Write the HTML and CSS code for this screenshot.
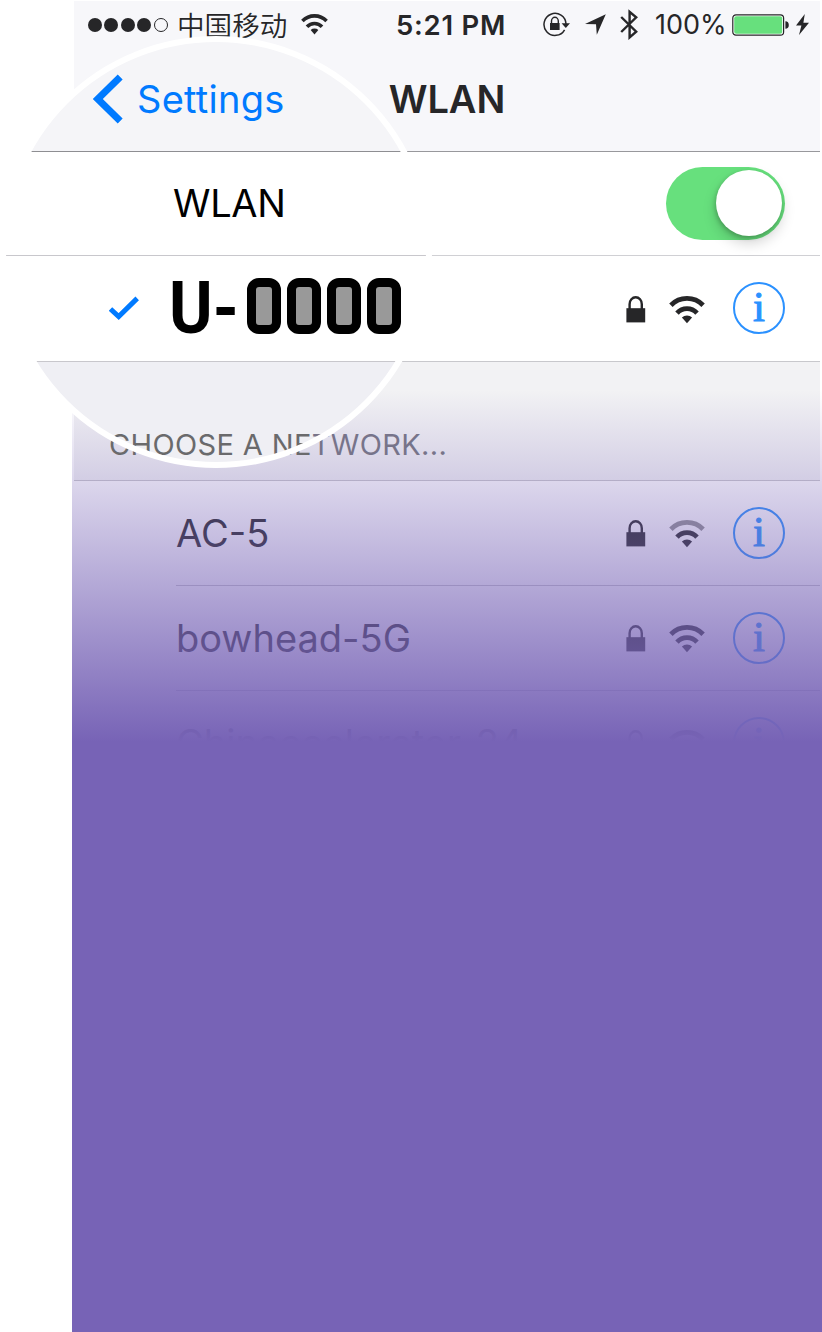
FILE: index.html
```html
<!DOCTYPE html>
<html lang="en">
<head>
<meta charset="utf-8">
<title>WLAN</title>
<link rel="stylesheet" href="styles.css">
</head>
<body>
<svg class="defs" aria-hidden="true">
  <symbol id="wifi" viewBox="0 0 38 28">
    <path d="M2.9 9.2A22.6 22.6 0 0 1 35.1 9.2" fill="none" stroke="currentColor" stroke-width="4.8"/>
    <path d="M9 17.1A13.6 13.6 0 0 1 29 17.1" fill="none" stroke="currentColor" stroke-width="4.8"/>
    <path d="M13.9 21.4A7.6 7.6 0 0 1 24.1 21.4L19 27.2Z" fill="currentColor"/>
  </symbol>
  <symbol id="wifi-weak" viewBox="0 0 38 28">
    <path d="M2.9 9.2A22.6 22.6 0 0 1 35.1 9.2" fill="none" stroke="currentColor" stroke-width="4.8" opacity=".5"/>
    <path d="M9 17.1A13.6 13.6 0 0 1 29 17.1" fill="none" stroke="currentColor" stroke-width="4.8"/>
    <path d="M13.9 21.4A7.6 7.6 0 0 1 24.1 21.4L19 27.2Z" fill="currentColor"/>
  </symbol>
  <symbol id="lock" viewBox="0 0 20 27">
    <path d="M3.6 13V8.2a6.1 6.9 0 0 1 12.2 0V13" fill="none" stroke="currentColor" stroke-width="2.4"/>
    <rect x=".4" y="12.2" width="18.8" height="14.2" fill="currentColor"/>
  </symbol>
</svg>

<main class="stage">
  <section class="phone">
    <div class="screen">
      <header class="top">
        <div class="status">
          <div class="signal"><i></i><i></i><i></i><i></i><i class="off"></i></div>
          <span class="carrier">中国移动</span>
          <svg class="status-wifi"><use href="#wifi"/></svg>
          <span class="time">5:21 PM</span>
          <svg class="rotation" viewBox="0 0 27 25">
            <path d="M21.6 17.8A11 11 0 1 1 23 12" fill="none" stroke="currentColor" stroke-width="1.5"/>
            <path d="M18.6 11.3h8.4l-4.2 4.6Z" fill="currentColor"/>
            <path d="M8.5 12V9a3.4 3.7 0 0 1 6.8 0v3" fill="none" stroke="currentColor" stroke-width="1.4"/>
            <rect x="7" y="11" width="9.6" height="7" fill="currentColor"/>
          </svg>
          <svg class="location" viewBox="0 0 21 21"><path d="M0 9.9L20.8.2 11.8 20.8 11 10.2Z" fill="currentColor"/></svg>
          <svg class="bluetooth" viewBox="0 0 19 31"><path d="M1.2 8L16.2 22.6 9.6 28.4V2.8L16.2 8.4 1.2 23" fill="none" stroke="currentColor" stroke-width="2.4"/></svg>
          <span class="percent">100%</span>
          <svg class="battery" viewBox="0 0 58 22">
            <rect x=".8" y=".8" width="50.8" height="20.4" rx="3.2" fill="#fff" stroke="currentColor" stroke-width="1.2"/>
            <rect x="2.2" y="2.2" width="48" height="17.6" rx="2" fill="#67e07d"/>
            <path d="M53.4 7.2a3.4 3.8 0 0 1 0 7.6Z" fill="currentColor"/>
          </svg>
          <svg class="bolt" viewBox="0 0 13 21"><path d="M8.8 0L0 11.6H5.4L3 21 13 8.8H7.4Z" fill="currentColor"/></svg>
        </div>
        <h1 class="title">WLAN</h1>
      </header>

      <div class="row row-wlan">
        <span class="switch"><span class="knob"></span></span>
      </div>
      <div class="row row-current">
        <svg class="lock"><use href="#lock"/></svg>
        <svg class="wifi"><use href="#wifi"/></svg>
        <span class="info">i</span>
      </div>

      <div class="group"><span class="group-label">CHOOSE A NE<span class="faded">TWORK...</span></span></div>

      <div class="row network">
        <span class="name ac">AC-5</span>
        <svg class="lock"><use href="#lock"/></svg>
        <svg class="wifi"><use href="#wifi-weak"/></svg>
        <span class="info">i</span>
      </div>
      <div class="row network">
        <span class="name bowhead">bowhead-5G</span>
        <svg class="lock"><use href="#lock"/></svg>
        <svg class="wifi"><use href="#wifi"/></svg>
        <span class="info">i</span>
      </div>
      <div class="row network">
        <span class="name">Chinaccelerator-24</span>
        <svg class="lock"><use href="#lock"/></svg>
        <svg class="wifi"><use href="#wifi"/></svg>
        <span class="info">i</span>
      </div>
    </div>
    <div class="fade"></div>
    <div class="floor"></div>
  </section>

  <section class="lens">
    <div class="lens-nav">
      <svg class="chevron" viewBox="0 0 30 50"><path d="M27.2 3L4.8 25 27.2 47" fill="none" stroke="#007aff" stroke-width="7"/></svg>
      <span class="back">Settings</span>
    </div>
    <div class="lens-row"><span class="lens-wlan">WLAN</span></div>
    <div class="lens-row lens-current">
      <svg class="check" viewBox="0 0 30 25"><path d="M1.5 13L9.7 20.6 28.2 2.4" fill="none" stroke="#007aff" stroke-width="5"/></svg>
      <span class="ssid">U-</span>
      <span class="digits"><b>0</b><b>0</b><b>0</b><b>0</b></span>
    </div>
  </section>
  <div class="ring"></div>
</main>
</body>
</html>
```

FILE: styles.css
```css
* { box-sizing: border-box; }

body {
  margin: 0;
  background: #fff;
  color: #262628;
  font-family: Inter, "Noto Sans CJK SC", sans-serif;
}

svg { display: block; flex: none; }
.defs { position: absolute; width: 0; height: 0; }

.stage { position: relative; width: 822px; height: 1332px; overflow: hidden; }

.phone {
  position: relative;
  display: flex;
  flex-direction: column;
  height: 1332px;
  margin-left: 72px;
  padding-top: 1px;
}

.screen { width: 746px; height: 741px; margin-left: 2px; overflow: hidden; }

.floor { flex: 1; background: #7763b6; }

.fade {
  position: absolute;
  left: 0;
  right: 0;
  top: 390px;
  height: 352px;
  background: linear-gradient(rgba(119, 99, 182, 0), #7763b6);
}

/* Status and navigation bars */
.top { height: 151px; background: #f7f7fa; border-bottom: 1px solid #98989c; }

.status { display: flex; align-items: center; height: 48px; padding-left: 14px; }

.signal { display: flex; gap: 2.4px; width: 80px; }
.signal i { flex: none; width: 14px; height: 14px; border-radius: 50%; background: currentColor; }
.signal .off { background: none; border: 1.2px solid currentColor; }

.carrier { width: 112px; margin: -2px 0 0 9px; font: 350 27.6px/48px "Noto Sans CJK SC", sans-serif; white-space: nowrap; }
.status-wifi { width: 29px; height: 21px; margin: -2px 0 0 11px; }
.time { width: 112px; margin-left: 67px; font-size: 27.5px; font-weight: 600; line-height: 48px; letter-spacing: .75px; white-space: nowrap; }
.rotation { width: 27px; height: 25px; margin: -2px 0 0 35px; }
.location { width: 21px; height: 21px; margin: -1px 0 0 15px; }
.bluetooth { width: 19px; height: 31px; margin: -2px 0 0 14px; }
.percent { width: 72px; margin-left: 16px; font-size: 27px; line-height: 48px; }
.battery { width: 58px; height: 22px; margin-left: 5px; }
.bolt { width: 13px; height: 21px; margin: -2px 0 0 6px; }

.title { margin: 26px 0 0; text-align: center; font-size: 38px; font-weight: 600; line-height: 48px; }

/* List rows */
.row {
  display: flex;
  align-items: center;
  justify-content: flex-end;
  height: 105px;
  padding: 0 35px 1px 0;
  background: #fff;
}

.row-wlan { height: 104px; padding-bottom: 0; border-bottom: 1px solid #d0d0d4; }
.row-current { height: 106px; border-bottom: 1px solid #c8c8cc; }

.switch {
  width: 119px;
  height: 73px;
  padding: 3px 3px 4px 50px;
  border-radius: 37px;
  background: #67e07d;
}

.knob {
  display: block;
  width: 66px;
  height: 66px;
  border-radius: 50%;
  background: #fff;
  box-shadow: 0 7px 14px rgba(0, 0, 0, .18), -1px 2px 4px rgba(0, 0, 0, .2);
}

.lock { width: 20px; height: 27px; margin-top: 2px; }
.wifi { width: 38px; height: 28px; margin: 3px 0 0 22px; }

.info {
  width: 52px;
  height: 52px;
  margin-left: 27px;
  border: 2px solid #2b91ff;
  border-radius: 50%;
  color: #2b91ff;
  font: 43px/46px "Liberation Serif", serif;
  text-align: center;
  -webkit-text-stroke: 1px #2b91ff;
}

.group { height: 119px; padding-left: 35px; background: #f2f2f4; border-bottom: 1px solid #c8c7cc; }

/* The label reads through the magnifier, so it sits between lens and ring */
.group-label {
  position: relative;
  z-index: 2;
  display: block;
  padding-top: 63px;
  color: #6a6a6c;
  font-size: 29px;
  line-height: 40px;
  letter-spacing: .36px;
  white-space: nowrap;
}
.faded { color: #77748a; }

.network { margin-left: 102px; box-shadow: -102px 0 #fff; border-bottom: 1px solid #c8c7cc; }
.name { margin-right: auto; font-size: 38px; line-height: 48px; white-space: nowrap; }

/* Magnifier over the left part of the screen */
.lens {
  position: absolute;
  z-index: 1;
  left: 4px;
  top: 40px;
  width: 424px;
  height: 424px;
  padding: 2px;
  overflow: hidden;
  border-radius: 50%;
  background: #efeff4;
  color: #000;
}

.ring {
  position: absolute;
  z-index: 3;
  left: 0;
  top: 36px;
  width: 432px;
  height: 432px;
  border: 6px solid #fff;
  border-radius: 50%;
}

.lens-nav {
  display: flex;
  align-items: center;
  height: 110px;
  padding: 4px 0 0 87px;
  background: #f5f5f8;
  border-bottom: 1px solid #8e8e92;
  box-shadow: 0 -2px #f5f5f8;
}

.chevron { width: 30px; height: 50px; }
.back { margin: 1px 0 0 14px; color: #007aff; font-size: 38px; line-height: 48px; letter-spacing: .25px; }

.lens-row {
  display: flex;
  align-items: center;
  height: 104px;
  padding: 0 0 2px 167px;
  background: #fff;
  border-bottom: 1px solid #c8c7cc;
}

.lens-wlan { font-size: 38px; line-height: 48px; letter-spacing: -.3px; }
.lens-current { height: 106px; padding: 0 0 0 103px; }
.check { width: 30px; height: 25px; }
.ssid {
  width: 78px;
  margin-left: 30px;
  font: 700 72px/84px Roboto, sans-serif;
  white-space: nowrap;
  transform: scaleX(.92);
  transform-origin: 0 50%;
}
.digits { display: flex; gap: 6px; margin-top: -6px; }
.digits b {
  width: 34px;
  height: 56px;
  border: 9px solid #000;
  border-radius: 12px;
  background: #999;
  font: 100 71px/38px Roboto, sans-serif;
  text-indent: -12px;
}
```
